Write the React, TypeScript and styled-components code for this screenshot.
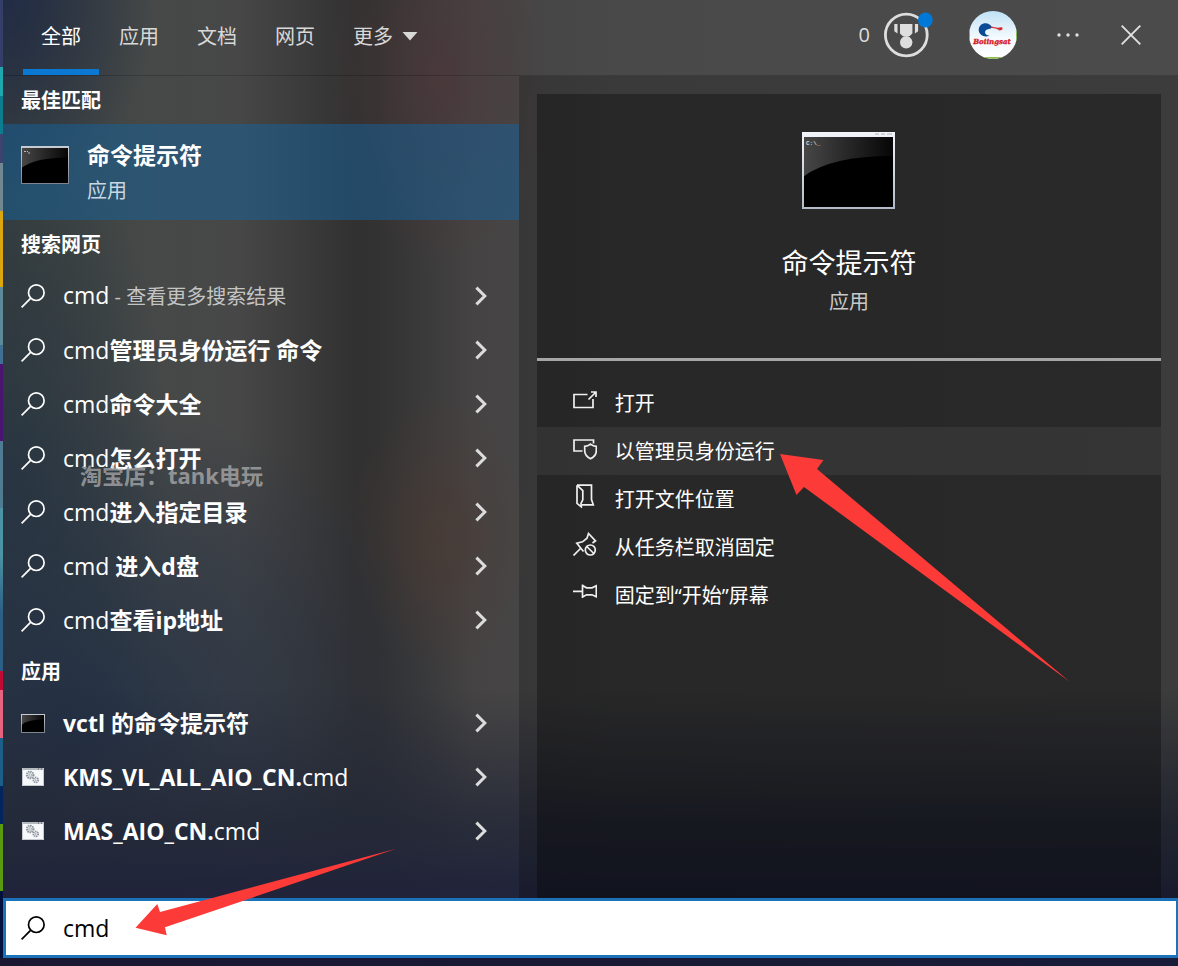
import React, { useId } from "react";
import styled, { createGlobalStyle } from "styled-components";

const latin = `"Open Sans", "Noto Sans CJK SC", sans-serif`;

const GlobalStyle = createGlobalStyle`
  *, *::before, *::after { box-sizing: border-box; }
  body { margin: 0; background: #1a1c33; }
  button, input { font: inherit; color: inherit; margin: 0; }
  button { border: 0; background: none; padding: 0; text-align: left; cursor: pointer; }
  h2, h3, p, ul { margin: 0; padding: 0; }
  ul { list-style: none; }
`;

const Screen = styled.div`
  position: relative;
  display: flex;
  flex-direction: column;
  min-height: 100vh;
  overflow: hidden;
  font-family: ${latin};
  font-size: 20px;
  line-height: 28px;
  color: #fff;
`;

const Desktop = styled.div`
  flex: 1;
  display: flex;
`;

const DesktopEdge = styled.div`
  flex: 0 0 3px;
  background: linear-gradient(
    #343e68 0 7%,
    #1fa7ae 7% 10%,
    #0b7d8e 10% 14%,
    #3b4470 14% 17%,
    #6f8892 17% 22%,
    #dca60e 22% 30%,
    #5d8a99 30% 36%,
    #3f6f93 36% 38%,
    #4b1470 38% 46%,
    #4f7c93 46% 53%,
    #4c93a3 53% 58%,
    #2b5f86 64% 70%,
    #c00a34 70% 72%,
    #e66480 72% 77%,
    #1b5f88 77% 82%,
    #02245f 82% 86%,
    #5a9a0e 86% 93%,
    #04103e 93%
  );
`;

const Flyout = styled.main`
  flex: 1;
  min-width: 0;
  display: flex;
  flex-direction: column;
  background:
    linear-gradient(rgba(34, 40, 56, 0) 72%, rgba(34, 39, 55, 0.8) 86%, #20233a 94%),
    radial-gradient(ellipse 110px 190px at 37% 8%, rgba(80, 54, 58, 0.6), rgba(80, 54, 58, 0.3) 50%, transparent),
    radial-gradient(ellipse 90px 140px at 37% 56%, rgba(78, 58, 50, 0.55), transparent),
    radial-gradient(ellipse 150px 200px at 0 0, #212b44, transparent),
    radial-gradient(ellipse 400px 330px at 6% 76%, rgba(34, 47, 68, 0.95), transparent),
    radial-gradient(ellipse 170px 360px at 0 50%, rgba(40, 53, 66, 0.9), transparent),
    linear-gradient(90deg, #373f3d 0, #464948 13%, #474747 20%, #323131 30%, #323232 32%, #454343 40%, #494949 52%, #4b4b4b 100%);
`;

const Header = styled.header`
  display: flex;
  justify-content: space-between;
  height: 76px;
  padding: 0 37px 0 20px;
  border-bottom: 1px solid rgba(0, 0, 0, 0.18);
`;

const Tabs = styled.div`
  display: flex;
  gap: 2px;
`;

const Tab = styled.button<{ $active?: boolean }>`
  display: flex;
  align-items: center;
  gap: 9px;
  padding: 2px 18px 0;
  border-bottom: 6px solid ${(p) => (p.$active ? "#0b78d4" : "transparent")};
  border-top: 2px solid transparent;
  color: ${(p) => (p.$active ? "#fff" : "#d8d8d8")};
  white-space: nowrap;
`;

const HeaderTools = styled.div`
  display: flex;
  align-items: center;
  padding-bottom: 5px;
`;

const Rewards = styled.button`
  display: flex;
  align-items: center;
  gap: 14px;
  margin-right: 35px;
  color: #dedede;
`;

const Tool = styled.button<{ $gap?: number }>`
  display: flex;
  margin-right: ${(p) => p.$gap ?? 0}px;
  color: #e0e0e0;
`;

const Body = styled.div`
  flex: 1;
  display: flex;
`;

const Results = styled.section`
  flex: 0 0 43.9%;
  min-width: 0;
`;

const GroupTitle = styled.h2`
  display: flex;
  align-items: center;
  height: 48px;
  padding: 2px 0 0 18px;
  font-size: 20px;
  font-weight: 700;
`;

const BestMatch = styled.button`
  display: flex;
  align-items: flex-start;
  gap: 18px;
  width: 100%;
  height: 96px;
  padding: 0 18px;
  background: rgba(20, 98, 155, 0.5);
`;

const BestIcon = styled.span`
  display: flex;
  padding-top: 22px;
`;

const BestText = styled.span`
  display: flex;
  flex-direction: column;
  gap: 8px;
  padding-top: 17px;
`;

const BestName = styled.span`
  font-size: 23px;
  font-weight: 700;
`;

const BestKind = styled.span`
  color: #c9d7e2;
`;

const List = styled.ul`
  padding-top: 1px;
`;

const Row = styled.button`
  display: flex;
  align-items: center;
  gap: 18px;
  width: 100%;
  height: 54px;
  padding: 0 32px 0 18px;
  font-size: 23px;
`;

const RowLabel = styled.span`
  flex: 1;
  min-width: 0;
  white-space: pre;
`;

const Strong = styled.b`
  font-weight: 700;
`;

const Hint = styled.span`
  font-size: 20px;
  color: #c4c4c4;
`;

const Details = styled.section`
  flex: 1;
  min-width: 0;
  display: flex;
  padding: 18px 17px 0 18px;
  background: rgba(0, 0, 0, 0.2);
`;

const Card = styled.div`
  flex: 1;
  background: rgba(0, 0, 0, 0.31);
`;

const CardHead = styled.div`
  display: flex;
  flex-direction: column;
  align-items: center;
  height: 267px;
  padding-top: 38px;
  border-bottom: 3px solid #a6a6a6;
`;

const CardTitle = styled.h3`
  margin-top: 34px;
  font-size: 27px;
  line-height: 40px;
  font-weight: 400;
`;

const CardKind = styled.p`
  margin-top: 5px;
  color: #c8c8c8;
`;

const Actions = styled.ul`
  padding-top: 18px;
`;

const Action = styled.button<{ $hover?: boolean }>`
  display: flex;
  align-items: center;
  gap: 18px;
  width: 100%;
  height: 48px;
  padding: 2px 36px 0;
  background: ${(p) => (p.$hover ? "rgba(255, 255, 255, 0.06)" : "transparent")};
`;

const ActionIcon = styled.span`
  display: flex;
  padding-bottom: 8px;
`;

const SearchBar = styled.form`
  display: flex;
  align-items: center;
  gap: 18px;
  height: 60px;
  padding: 0 15px;
  border: 3px solid #1b72b8;
  border-right-width: 2px;
  background: #fff;
  color: #000;
`;

const SearchInput = styled.input`
  flex: 1;
  min-width: 0;
  height: 48px;
  padding: 0;
  border: 0;
  outline: 0;
  background: transparent;
  font-size: 23px;
`;

const Taskbar = styled.div`
  height: 8px;
  background: linear-gradient(90deg, #1b1733, #181c38);
`;

const Watermark = styled.span`
  position: absolute;
  left: 80px;
  top: 461px;
  font-size: 22px;
  font-weight: 700;
  color: rgba(200, 200, 200, 0.62);
  white-space: nowrap;
  pointer-events: none;
`;

const Arrows = styled.svg`
  position: absolute;
  left: 0;
  top: 0;
  pointer-events: none;
`;

const SearchIcon = () => (
  <svg width="24" height="24" viewBox="0 0 24 24" fill="none" stroke="currentColor" strokeWidth="1.7" aria-hidden>
    <circle cx="15.3" cy="8.7" r="7.8" />
    <path d="M9.8 14.2 0.6 23.4" />
  </svg>
);

const Chevron = () => (
  <svg width="12" height="20" viewBox="0 0 12 20" fill="none" stroke="#dcdcdc" strokeWidth="3" aria-hidden>
    <path d="M1.4 1.6 9.8 10 1.4 18.4" />
  </svg>
);

const Terminal = ({ width, height, detail }: { width: number; height: number; detail?: boolean }) => {
  const id = useId();
  const bar = detail ? 5 : width > 40 ? 2 : 1;
  const edge = detail ? 2 : 1;
  const w = width - edge * 2;
  const h = height - bar - edge;
  return (
    <svg width={width} height={height} viewBox={`0 0 ${width} ${height}`} aria-hidden>
      <defs>
        <linearGradient id={id + "g"} x1="0" y1="0" x2="1" y2="0">
          <stop offset="0" stopColor="#474747" />
          <stop offset="1" stopColor="#060606" />
        </linearGradient>
        <linearGradient id={id + "f"} x1="0" y1="0" x2="0" y2="1">
          <stop offset="0" stopColor={detail ? "#f4f5fa" : "#c9ccd4"} />
          <stop offset="1" stopColor={detail ? "#b3bac8" : "#7d838f"} />
        </linearGradient>
      </defs>
      <rect width={width} height={height} fill={`url(#${id}f)`} />
      <g transform={`translate(${edge} ${bar})`}>
        <rect width={w} height={h} fill={`url(#${id}g)`} />
        <path d={`M0 ${h * 0.56}Q${w * 0.3} ${h * 0.27} ${w} ${h * 0.27}V${h}H0Z`} fill="#000" />
        {width > 40 && !detail && <path d="M2 3.500h2M5 3.500h1M6 5h2" stroke="#bbb" />}
      </g>
      {detail && (
        <>
          <path d="M73 2h4M79 2h4M85 2h5" stroke="#c3c7d0" strokeWidth="1.5" />
          <text x="4" y="13" fontFamily="Liberation Mono" fontSize="6" fontWeight="700" fill="#d8d8d8">
            C:\_
          </text>
        </>
      )}
    </svg>
  );
};

const ScriptIcon = () => (
  <svg width="24" height="20" viewBox="0 0 24 20" fill="none" aria-hidden>
    <rect x="1" y="1" width="22" height="18" fill="#f6f8fa" />
    <path d="M1 2h22" stroke="#b4b9bf" strokeWidth="2" />
    <path d="M17 2h1M20 2h1" stroke="#555" />
    <path d="M1.5 1v17.5h21V1" stroke="#c5cad0" />
    <circle cx="9.2" cy="8" r="3.2" stroke="#8b949d" strokeWidth="2.2" strokeDasharray="1.4 0.7" />
    <circle cx="9.2" cy="8" r="1.3" stroke="#8b949d" strokeWidth="0.7" />
    <circle cx="14.8" cy="13" r="2.4" stroke="#8b949d" strokeWidth="1.8" strokeDasharray="1.3 0.6" />
    <circle cx="14.8" cy="13" r="0.8" fill="#8b949d" />
  </svg>
);

const MedalIcon = () => (
  <svg width="50" height="46" viewBox="0 0 50 46" aria-hidden>
    <circle cx="22.3" cy="23" r="20.9" fill="none" stroke="#dedede" strokeWidth="2.8" />
    <path d="M16 12h12.4v9.4l-2.9 2.9h-6.6L16 21.4z" fill="#dedede" />
    <circle cx="22.2" cy="30.3" r="6.2" fill="#dedede" />
    <path d="M10.3 12h3.2v9.4l-3.2-2.2zM34.1 12h-3.2v9.4l3.2-2.2z" fill="#dedede" />
    <circle cx="41.4" cy="8" r="7.4" fill="#0078d7" />
  </svg>
);

const Avatar = () => (
  <svg width="48" height="48" viewBox="0 0 48 48" role="img" aria-label="Boiingsat">
    <defs>
      <linearGradient id="sky" x1="0" y1="0" x2="0" y2="1">
        <stop offset="0" stopColor="#bfe2f6" />
        <stop offset="0.55" stopColor="#f4fafd" />
        <stop offset="1" stopColor="#fff" />
      </linearGradient>
      <clipPath id="disc">
        <circle cx="24" cy="24" r="24" />
      </clipPath>
    </defs>
    <g clipPath="url(#disc)">
      <rect width="48" height="48" fill="url(#sky)" />
      <rect y="46" width="48" height="2" fill="#8cc152" />
      <rect width="1" height="34" fill="#3fa3dc" />
      <rect x="47" y="14" width="1" height="20" fill="#7ab648" />
      <path d="M20.500 13.400C16 10.400 9.700 13.200 9.700 18.800c0 5 5.200 8.200 11 6-4.200-.4-5.800-3.600-3.800-5.600 1.500-1.500 4.600-.7 5.500-2.400.7-1.300-.5-2.600-1.900-3.400z" fill="#0b4a94" />
      <path d="M21.500 15.400c4 .2 6 2 10.600.9 1.400-.2 1.800 1 1.200 2.300-1.500 1.300-4.200.8-5.600 0l3.800-.4c-4 .1-6.200-1.500-10-1.500z" fill="#d8232a" />
      <text x="23" y="33" textAnchor="middle" fontFamily="DejaVu Serif" fontSize="7" fontWeight="700" fontStyle="italic" fill="#d8151b" stroke="#d8151b" strokeWidth="0.3">
        Boiingsat
      </text>
    </g>
  </svg>
);

const actionPaths: Record<string, React.ReactNode> = {
  open: <path d="M14.500 6.500H1V19.500H20V11M15.500 11.500 22.500 4.500M18 4H23V9" />,
  admin: (
    <>
      <path d="M20.500 7.500V4H1V15H9.500" />
      <path d="M17.500 8.200c-1.800 1.500-3.600 2.200-5.800 2.200v4.400c0 3.600 2.400 6.300 5.800 8 3.400-1.700 5.800-4.400 5.800-8v-4.400c-2.200 0-4-.7-5.800-2.200z" />
    </>
  ),
  folder: (
    <>
      <path d="M4 1.200H18.500V15.500L20.300 20.800H9" />
      <path d="M4 1.200V19.300L8.300 22.800 8 19.300 9.800 15.800V6.500L4 1.200" />
    </>
  ),
  unpin: (
    <>
      <path d="M0.500 23.500 7.500 16.500" />
      <path d="M10.500 19.500 3.800 11.200 9.500 9.800 14 6.200 15.500 1.500 22.500 8.800 19.500 11" />
      <circle cx="17.300" cy="18" r="5" />
      <path d="M13.800 14.500 20.800 21.500" />
    </>
  ),
  pin: <path d="M0 11.300H9.500M9.500 4.500V18M9.500 5.500 13.500 7.800H19L23.300 5.800V16.800L19 14.800H13.500L9.500 17" />,
};

const actions = [
  { icon: "open", label: "打开" },
  { icon: "admin", label: "以管理员身份运行", hover: true },
  { icon: "folder", label: "打开文件位置" },
  { icon: "unpin", label: "从任务栏取消固定" },
  { icon: "pin", label: "固定到“开始”屏幕" },
];

const suggestions = ["管理员身份运行 命令", "命令大全", "怎么打开", "进入指定目录", " 进入d盘", "查看ip地址"];

const ResultRow = ({ icon, children }: { icon: React.ReactNode; children: React.ReactNode }) => (
  <li>
    <Row type="button">
      {icon}
      <RowLabel>{children}</RowLabel>
      <Chevron />
    </Row>
  </li>
);

export default function App() {
  return (
    <Screen lang="zh-CN">
      <GlobalStyle />
      <Desktop>
        <DesktopEdge />
        <Flyout>
          <Header>
            <Tabs role="tablist">
              <Tab $active role="tab" aria-selected>全部</Tab>
              <Tab role="tab">应用</Tab>
              <Tab role="tab">文档</Tab>
              <Tab role="tab">网页</Tab>
              <Tab role="tab">
                更多
                <svg width="16" height="9" viewBox="0 0 16 9" aria-hidden>
                  <path d="M0.500 0H15.500L8 8.500z" fill="#d8d8d8" />
                </svg>
              </Tab>
            </Tabs>
            <HeaderTools>
              <Rewards type="button">
                0
                <MedalIcon />
              </Rewards>
              <Tool type="button" $gap={40}>
                <Avatar />
              </Tool>
              <Tool type="button" $gap={42} aria-label="选项">
                <svg width="22" height="6" viewBox="0 0 22 6" fill="currentColor" aria-hidden>
                  <circle cx="2" cy="3" r="1.700" />
                  <circle cx="11" cy="3" r="1.700" />
                  <circle cx="20" cy="3" r="1.700" />
                </svg>
              </Tool>
              <Tool type="button" aria-label="关闭">
                <svg width="20" height="20" viewBox="0 0 20 20" stroke="currentColor" strokeWidth="1.900" aria-hidden>
                  <path d="M0.700 0.700 19.300 19.300M19.300 0.700 0.700 19.300" />
                </svg>
              </Tool>
            </HeaderTools>
          </Header>

          <Body>
            <Results>
              <GroupTitle>最佳匹配</GroupTitle>
              <BestMatch type="button">
                <BestIcon>
                  <Terminal width={48} height={38} />
                </BestIcon>
                <BestText>
                  <BestName>命令提示符</BestName>
                  <BestKind>应用</BestKind>
                </BestText>
              </BestMatch>

              <GroupTitle>搜索网页</GroupTitle>
              <List>
                <ResultRow icon={<SearchIcon />}>
                  cmd<Hint> - 查看更多搜索结果</Hint>
                </ResultRow>
                {suggestions.map((text) => (
                  <ResultRow key={text} icon={<SearchIcon />}>
                    cmd<Strong>{text}</Strong>
                  </ResultRow>
                ))}
              </List>

              <GroupTitle>应用</GroupTitle>
              <List>
                <ResultRow icon={<Terminal width={24} height={19} />}>
                  <Strong>vctl 的命令提示符</Strong>
                </ResultRow>
                <ResultRow icon={<ScriptIcon />}>
                  <Strong>KMS_VL_ALL_AIO_CN.</Strong>cmd
                </ResultRow>
                <ResultRow icon={<ScriptIcon />}>
                  <Strong>MAS_AIO_CN.</Strong>cmd
                </ResultRow>
              </List>
            </Results>

            <Details>
              <Card>
                <CardHead>
                  <Terminal width={93} height={77} detail />
                  <CardTitle>命令提示符</CardTitle>
                  <CardKind>应用</CardKind>
                </CardHead>
                <Actions>
                  {actions.map((a) => (
                    <li key={a.icon}>
                      <Action type="button" $hover={a.hover}>
                        <ActionIcon>
                          <svg width="24" height="24" viewBox="0 0 24 24" fill="none" stroke="#f0f0f0" strokeWidth="1.700" aria-hidden>
                            {actionPaths[a.icon]}
                          </svg>
                        </ActionIcon>
                        {a.label}
                      </Action>
                    </li>
                  ))}
                </Actions>
              </Card>
            </Details>
          </Body>

          <SearchBar onSubmit={(e) => e.preventDefault()}>
            <SearchIcon />
            <SearchInput aria-label="搜索" defaultValue="cmd" />
          </SearchBar>
        </Flyout>
      </Desktop>
      <Taskbar />

      <Watermark>淘宝店：tank电玩</Watermark>
      <Arrows width="1178" height="966" viewBox="0 0 1178 966" fill="#fc3a38" aria-hidden>
        <path d="M780 454 823.500 460 817 469 1070 682 804 487 796.500 495z" />
        <path d="M135.500 927.700 157.300 904 160 912 396 848.800 165 927.300 166.700 935.300z" />
      </Arrows>
    </Screen>
  );
}
